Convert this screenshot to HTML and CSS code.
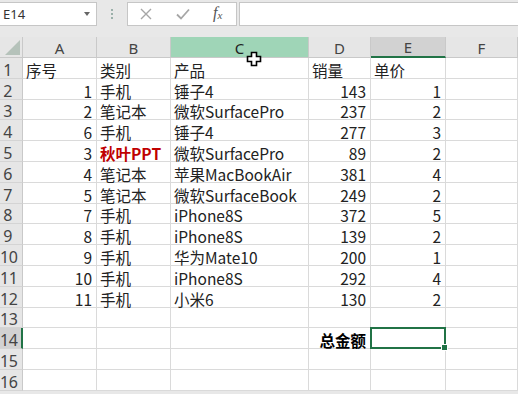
FILE: index.html
```html
<!DOCTYPE html>
<html lang="zh-CN">
<head>
    <meta charset="UTF-8">
    <title>销量表</title>
    <link rel="stylesheet" href="styles.css">
</head>
<body>
    <!--编辑栏-->
    <div class="toolbar">
        <div class="namebox"><span>E14</span><i class="caret"></i></div>
        <div class="grip"><i></i><i></i><i></i></div>
        <div class="fbtns">
            <svg class="ico" width="14" height="14" viewBox="0 0 14 14"><path d="M2 2 L12 12 M12 2 L2 12" stroke="#a6a6a6" stroke-width="1.4" fill="none"/></svg>
            <svg class="ico" width="16" height="14" viewBox="0 0 16 14"><path d="M2 7.5 L6 11.5 L14 2.5" stroke="#a6a6a6" stroke-width="1.8" fill="none"/></svg>
            <span class="fx">f<sub>x</sub></span>
        </div>
        <div class="finput"></div>
    </div>

    <!--表格区域-->
    <div class="wrap">
        <table class="sheet">
            <colgroup>
                <col class="c-rh"><col class="c-a"><col class="c-b"><col class="c-c"><col class="c-d"><col class="c-e"><col class="c-f">
            </colgroup>
            <thead>
                <tr><th class="corner"><span class="tri"></span></th><th>A</th><th>B</th><th class="hot">C</th><th>D</th><th class="cur">E</th><th>F</th></tr>
            </thead>
            <tbody>
                <tr><th>1</th><td>序号</td><td>类别</td><td>产品</td><td>销量</td><td>单价</td><td></td></tr>
                <tr><th>2</th><td class="n">1</td><td>手机</td><td>锤子4</td><td class="n">143</td><td class="n">1</td><td></td></tr>
                <tr><th>3</th><td class="n">2</td><td>笔记本</td><td>微软SurfacePro</td><td class="n">237</td><td class="n">2</td><td></td></tr>
                <tr><th>4</th><td class="n">6</td><td>手机</td><td>锤子4</td><td class="n">277</td><td class="n">3</td><td></td></tr>
                <tr><th>5</th><td class="n">3</td><td class="red">秋叶PPT</td><td>微软SurfacePro</td><td class="n">89</td><td class="n">2</td><td></td></tr>
                <tr><th>6</th><td class="n">4</td><td>笔记本</td><td>苹果MacBookAir</td><td class="n">381</td><td class="n">4</td><td></td></tr>
                <tr><th>7</th><td class="n">5</td><td>笔记本</td><td>微软SurfaceBook</td><td class="n">249</td><td class="n">2</td><td></td></tr>
                <tr><th>8</th><td class="n">7</td><td>手机</td><td>iPhone8S</td><td class="n">372</td><td class="n">5</td><td></td></tr>
                <tr><th>9</th><td class="n">8</td><td>手机</td><td>iPhone8S</td><td class="n">139</td><td class="n">2</td><td></td></tr>
                <tr><th>10</th><td class="n">9</td><td>手机</td><td>华为Mate10</td><td class="n">200</td><td class="n">1</td><td></td></tr>
                <tr><th>11</th><td class="n">10</td><td>手机</td><td>iPhone8S</td><td class="n">292</td><td class="n">4</td><td></td></tr>
                <tr><th>12</th><td class="n">11</td><td>手机</td><td>小米6</td><td class="n">130</td><td class="n">2</td><td></td></tr>
                <tr><th>13</th><td></td><td></td><td></td><td></td><td></td><td></td></tr>
                <tr><th class="cur">14</th><td></td><td></td><td></td><td class="n bold">总金额</td><td class="sel"></td><td></td></tr>
                <tr><th>15</th><td></td><td></td><td></td><td></td><td></td><td></td></tr>
                <tr><th>16</th><td></td><td></td><td></td><td></td><td></td><td></td></tr>
            </tbody>
        </table>
        <!--鼠标指针-->
        <svg class="pointer" width="16" height="16" viewBox="0 0 16 16">
            <path d="M5.5 1.5 H10.5 V5.5 H14.5 V10.5 H10.5 V14.5 H5.5 V10.5 H1.5 V5.5 H5.5 Z" fill="#fff" stroke="#000" stroke-width="1.6"/>
        </svg>
    </div>
</body>
</html>
```
FILE: styles.css
```css
*{
    margin: 0;
    padding: 0;
}
body{
    background-color: #e8e8e8;
    font-family: "Noto Sans", "Noto Sans CJK SC", sans-serif;
    overflow: hidden;
}
.toolbar{
    display: flex;
    height: 28px;
    padding-top: 2px;
    box-sizing: border-box;
    margin-bottom: 9px;
}
.namebox{
    width: 97px;
    height: 24px;
    box-sizing: border-box;
    background-color: #fff;
    border: 1px solid #c6c6c6;
    border-left: none;
    display: flex;
    align-items: center;
    padding: 0 6px 0 3px;
    font-size: 13px;
    color: #333;
}
.caret{
    margin-left: auto;
    border-left: 3.5px solid transparent;
    border-right: 3.5px solid transparent;
    border-top: 4px solid #666;
}
.grip{
    width: 30px;
    height: 24px;
    display: flex;
    flex-direction: column;
    align-items: center;
    justify-content: center;
    gap: 2px;
}
.grip i{
    width: 2px;
    height: 2px;
    background-color: #9bb0aa;
}
.fbtns{
    width: 110px;
    height: 24px;
    box-sizing: border-box;
    background-color: #fff;
    border: 1px solid #c6c6c6;
    display: flex;
    align-items: center;
    padding-left: 11px;
    gap: 22px;
}
.fx{
    font-family: "Liberation Serif", serif;
    font-style: italic;
    font-size: 16px;
    color: #555;
    line-height: 18px;
}
.fx sub{
    font-size: 11px;
    vertical-align: -1px;
}
.finput{
    flex: 1;
    height: 24px;
    margin-left: 2px;
    box-sizing: border-box;
    background-color: #fff;
    border: 1px solid #c6c6c6;
    border-right: none;
}
.wrap{
    position: relative;
    background-color: #fff;
}
.sheet{
    table-layout: fixed;
    width: 518px;
    border-collapse: separate;
    border-spacing: 0;
}
.c-rh{ width: 23px; }
.c-a{ width: 74px; }
.c-b{ width: 74px; }
.c-c{ width: 138px; }
.c-d{ width: 62px; }
.c-e{ width: 75px; }
.c-f{ width: 72px; }
.sheet tr{
    height: 20.8px;
}
.sheet thead tr{
    height: 21px;
}
.sheet th{
    background-color: #e6e6e6;
    color: #444;
    font-weight: normal;
    border-right: 1px solid #c9c9c9;
    border-bottom: 1px solid #c9c9c9;
    font-size: 15px;
    line-height: 16px;
}
.sheet thead th{
    font-size: 15px;
    vertical-align: bottom;
    padding-bottom: 1px;
}
.sheet tbody th{
    text-align: center;
    padding-right: 7px;
    font-size: 16px;
    vertical-align: bottom;
    border-bottom-color: #d4d4d4;
    letter-spacing: -0.5px;
}
.sheet th.hot{
    background-color: #9fd5b7;
    color: #222;
}
.sheet thead th.cur{
    background-color: #d2d2d2;
    border-bottom: 2px solid #217346;
}
.sheet tbody th.cur{
    background-color: #d2d2d2;
    border-right: 2px solid #217346;
}
.corner{
    position: relative;
}
.tri{
    position: absolute;
    right: 2px;
    bottom: 2px;
    width: 15px;
    height: 15px;
    background-color: #b5c2ba;
    clip-path: polygon(100% 0, 100% 100%, 0 100%);
}
.sheet td{
    border-right: 1px solid #dadada;
    border-bottom: 1px solid #dadada;
    font-family: "Noto Sans CJK SC", sans-serif;
    font-size: 15.5px;
    line-height: 16px;
    color: #222;
    white-space: nowrap;
    padding: 0 3px;
    vertical-align: bottom;
}
.sheet td.n{
    text-align: right;
    padding-right: 4px;
}
.sheet td.red{
    color: #c00000;
    font-weight: bold;
}
.sheet td.bold{
    font-weight: bold;
    color: #000;
}
/*选中的单元格*/
.sheet td.sel{
    position: relative;
}
.sheet td.sel::after{
    content: "";
    position: absolute;
    left: -1px;
    top: -1px;
    right: -1px;
    bottom: -1px;
    border: 2px solid #217346;
}
.sheet td.sel::before{
    content: "";
    position: absolute;
    right: -3px;
    bottom: -3px;
    width: 5px;
    height: 5px;
    background-color: #217346;
    border: 1px solid #fff;
    z-index: 1;
}
.pointer{
    position: absolute;
    left: 246px;
    top: 14px;
}
```
